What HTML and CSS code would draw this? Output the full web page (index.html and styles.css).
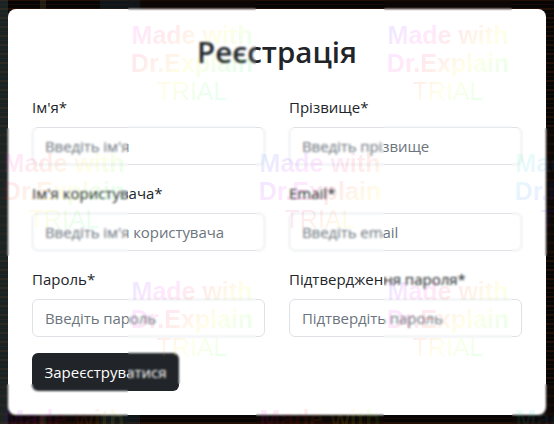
FILE: index.html
```html
<!DOCTYPE html>
<html lang="uk">
<head>
  <meta charset="UTF-8">
  <meta name="viewport" content="width=device-width, initial-scale=1.0">
  <title>Реєстрація</title>
  <link rel="stylesheet" href="styles.css">
</head>
<body>
  <div class="register-card">
    <h2>Реєстрація</h2>
    <form class="register-form">
      <div class="field">
        <label for="firstName">Ім'я*</label>
        <input type="text" id="firstName" placeholder="Введіть ім'я">
      </div>
      <div class="field">
        <label for="lastName">Прізвище*</label>
        <input type="text" id="lastName" placeholder="Введіть прізвище">
      </div>
      <div class="field">
        <label for="username">Ім'я користувача*</label>
        <input type="text" id="username" placeholder="Введіть ім'я користувача">
      </div>
      <div class="field">
        <label for="email">Email*</label>
        <input type="email" id="email" placeholder="Введіть email">
      </div>
      <div class="field">
        <label for="password">Пароль*</label>
        <input type="password" id="password" placeholder="Введіть пароль">
      </div>
      <div class="field">
        <label for="confirm">Підтвердження пароля*</label>
        <input type="password" id="confirm" placeholder="Підтвердіть пароль">
      </div>
      <div class="actions">
        <button type="submit">Зареєструватися</button>
      </div>
    </form>
  </div>

  <!-- trial watermark over the whole page -->
  <div class="watermark">
    <div class="tile"></div>
    <div class="tile mark pink"><b>Made with</b><b>Dr.Explain</b><span>TRIAL</span></div>
    <div class="tile"></div>
    <div class="tile mark lavender"><b>Made with</b><b>Dr.Explain</b><span>TRIAL</span></div>
    <div class="tile"></div>

    <div class="tile mark pink"><b>Made with</b><b>Dr.Explain</b><span>TRIAL</span></div>
    <div class="tile"></div>
    <div class="tile mark blue"><b>Made with</b><b>Dr.Explain</b><span>TRIAL</span></div>
    <div class="tile"></div>
    <div class="tile mark mint"><b>Made with</b><b>Dr.Explain</b><span>TRIAL</span></div>

    <div class="tile"></div>
    <div class="tile mark lavender"><b>Made with</b><b>Dr.Explain</b><span>TRIAL</span></div>
    <div class="tile"></div>
    <div class="tile mark lavender"><b>Made with</b><b>Dr.Explain</b><span>TRIAL</span></div>
    <div class="tile"></div>

    <div class="tile mark lavender"><b>Made with</b><b>Dr.Explain</b><span>TRIAL</span></div>
    <div class="tile"></div>
    <div class="tile mark pink"><b>Made with</b><b>Dr.Explain</b><span>TRIAL</span></div>
    <div class="tile"></div>
    <div class="tile mark mint"><b>Made with</b><b>Dr.Explain</b><span>TRIAL</span></div>
  </div>
</body>
</html>
```

FILE: styles.css
```css
* { box-sizing: border-box; }
html, body { height: 100%; }
body {
  margin: 0;
  padding: 0 8px;
  display: flex;
  align-items: center;
  overflow: hidden;
  font-family: "Open Sans", "Noto Sans", sans-serif;
  font-size: 15px;
  color: #212529;
  background-color: #080605;
  background-image:
    linear-gradient(90deg, rgba(60,90,90,0.35) 0 8px, transparent 8px 40px, rgba(90,80,50,0.3) 40px 46px, transparent 46px 100px, rgba(30,60,70,0.3) 100px 140px, transparent 140px),
    repeating-linear-gradient(0deg, rgba(110,40,10,0.28) 0 2px, transparent 2px 5px, rgba(60,20,20,0.3) 5px 6px, transparent 6px 9px);
}
.register-card { width: 100%; background: white; padding: 24px; border-radius: 8px; }
h2 { margin: 0 0 24px; text-align: center; font-size: 29.5px; font-weight: 600; line-height: 38px; }
.register-form { display: grid; grid-template-columns: 1fr 1fr; column-gap: 24px; row-gap: 16px; }
label { display: block; margin-bottom: 8px; line-height: 24px; }
input { display: block; width: 100%; height: 38px; padding: 6px 12px; border: 1px solid #dee2e6; border-radius: 6px; background: white; color: #212529; font: inherit; }
input::placeholder { color: #6c757d; opacity: 1; letter-spacing: -0.08px; }
.actions { grid-column: 1 / -1; display: flex; }
button { height: 38px; padding: 0 12.5px; background-color: #212529; color: white; border: none; border-radius: 6px; font: inherit; cursor: pointer; }

.watermark { position: fixed; top: 0; left: 0; width: 640px; display: grid; grid-template-columns: repeat(5, 128px); grid-auto-rows: 128px; pointer-events: none; }
.tile { overflow: hidden; }
.mark { padding-top: 21px; text-align: center; font-family: "Liberation Sans", Arial, sans-serif; font-size: 25px; line-height: 28px; white-space: nowrap; color: transparent; -webkit-background-clip: text; background-clip: text; backdrop-filter: blur(1.2px); }
.mark b, .mark span { display: block; }
.pink { background-image: linear-gradient(135deg, rgba(255,0,255,0.09) 12%, rgba(255,0,0,0.08) 30%, rgba(255,255,0,0.09) 50%, rgba(0,255,0,0.08) 65%, rgba(0,255,150,0.09) 80%); }
.lavender { background-image: linear-gradient(135deg, rgba(60,0,255,0.09) 12%, rgba(255,0,255,0.09) 27%, rgba(255,0,0,0.08) 42%, rgba(255,255,0,0.09) 58%, rgba(0,255,0,0.08) 75%); }
.blue { background-image: linear-gradient(135deg, rgba(0,130,255,0.09) 12%, rgba(80,0,255,0.09) 22%, rgba(255,0,255,0.09) 38%, rgba(255,0,0,0.08) 55%, rgba(255,255,0,0.09) 75%); }
.mint { background-image: linear-gradient(135deg, rgba(0,255,150,0.09) 12%, rgba(0,130,255,0.09) 30%, rgba(80,0,255,0.09) 50%, rgba(255,0,255,0.09) 70%); }
```
